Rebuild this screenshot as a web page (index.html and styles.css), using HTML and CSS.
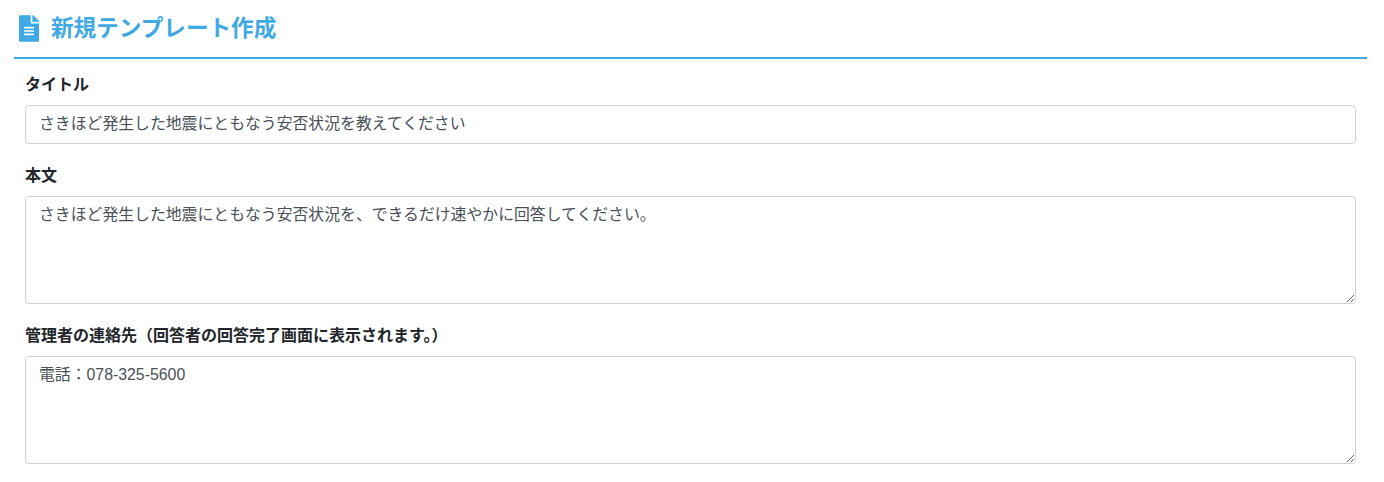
FILE: index.html
```html
<!DOCTYPE html>
<html lang="ja">
<head>
    <meta charset="UTF-8">
    <title>新規テンプレート作成</title>
    <link rel="stylesheet" href="styles.css">
</head>
<body>
    <div class="container">
        <h1 class="page-title">
            <svg class="title-icon" viewBox="0 0 384 512" aria-hidden="true">
                <path fill="currentColor" d="M224 136V0H24C10.700 0 0 10.700 0 24v464c0 13.300 10.700 24 24 24h336c13.300 0 24-10.700 24-24V160H248c-13.200 0-24-10.800-24-24zm64 236c0 6.600-5.400 12-12 12H108c-6.600 0-12-5.400-12-12v-8c0-6.600 5.400-12 12-12h168c6.600 0 12 5.400 12 12v8zm0-64c0 6.600-5.400 12-12 12H108c-6.600 0-12-5.400-12-12v-8c0-6.600 5.400-12 12-12h168c6.600 0 12 5.400 12 12v8zm0-72v8c0 6.600-5.400 12-12 12H108c-6.600 0-12-5.400-12-12v-8c0-6.600 5.400-12 12-12h168c6.600 0 12 5.400 12 12zm96-114.100v6.100H256V0h6.100c6.400 0 12.500 2.500 17 7l97.900 98c4.500 4.500 7 10.600 7 16.900z"/>
            </svg>
            新規テンプレート作成
        </h1>

        <form class="template-form">
            <div class="form-group">
                <label for="title">タイトル</label>
                <input type="text" id="title" class="form-control" value="さきほど発生した地震にともなう安否状況を教えてください">
            </div>
            <div class="form-group">
                <label for="body">本文</label>
                <textarea id="body" class="form-control" rows="4">さきほど発生した地震にともなう安否状況を、できるだけ速やかに回答してください。</textarea>
            </div>
            <div class="form-group">
                <label for="contact">管理者の連絡先（回答者の回答完了画面に表示されます。）</label>
                <textarea id="contact" class="form-control" rows="4">電話：078-325-5600</textarea>
            </div>
        </form>
    </div>
</body>
</html>
```

FILE: styles.css
```css
:root {
    --primary: #3fa9e6;
    --text: #212529;
    --input-text: #495057;
    --border: #ced4da;
}

* {
    box-sizing: border-box;
}

body {
    margin: 0;
    font-family: "Liberation Sans", "Noto Sans CJK JP", sans-serif;
    font-size: 16px;
    line-height: 1.5;
    color: var(--text);
    background: white;
}

.container {
    padding: 0 17px 0 14px;
}

.page-title {
    display: flex;
    align-items: center;
    gap: 12px;
    height: 59px;
    margin: 0;
    padding: 0 0 0 5px;
    border-bottom: 2px solid var(--primary);
    color: var(--primary);
    font-size: 22.6px;
    font-weight: bold;
}

.title-icon {
    width: 20px;
    height: 27px;
}

.template-form {
    padding: 14px 11px 0;
}

.form-group {
    margin-bottom: 20px;
}

label {
    display: block;
    margin-bottom: 8px;
    font-weight: bold;
}

.form-control {
    display: block;
    width: 100%;
    padding: 6px 13px;
    border: 1px solid var(--border);
    border-radius: 4px;
    font-family: inherit;
    font-size: 15.85px;
    line-height: 1.5;
    color: var(--input-text);
    background: white;
}

input.form-control {
    height: 39px;
    padding-top: 4px;
    padding-bottom: 8px;
}

textarea.form-control {
    height: 108px;
    resize: vertical;
}
```
